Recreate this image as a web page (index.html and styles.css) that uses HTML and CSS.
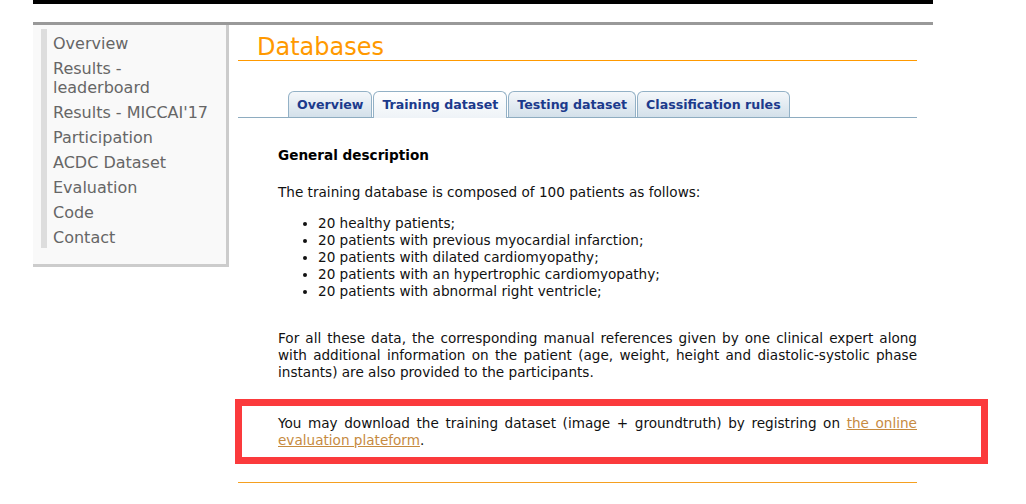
FILE: index.html
```html
<!DOCTYPE html>
<html lang="en">
<head>
<meta charset="utf-8">
<title>Databases</title>
<link rel="stylesheet" href="styles.css">
</head>
<body>
<div class="page">
  <div class="topbar"></div>
  <div class="main">
    <nav class="sidebar">
      <ul class="menu">
        <li>Overview</li>
        <li>Results -<br>leaderboard</li>
        <li>Results - MICCAI'17</li>
        <li>Participation</li>
        <li>ACDC Dataset</li>
        <li>Evaluation</li>
        <li>Code</li>
        <li>Contact</li>
      </ul>
    </nav>
    <div class="content">
      <h1 class="title">Databases</h1>
      <div class="tabs">
        <div class="tab">Overview</div>
        <div class="tab active">Training dataset</div>
        <div class="tab">Testing dataset</div>
        <div class="tab">Classification rules</div>
      </div>
      <div class="body">
        <h2 class="subtitle">General description</h2>
        <p class="intro">The training database is composed of 100 patients as follows:</p>
        <ul class="list">
          <li>20 healthy patients;</li>
          <li>20 patients with previous myocardial infarction;</li>
          <li>20 patients with dilated cardiomyopathy;</li>
          <li>20 patients with an hypertrophic cardiomyopathy;</li>
          <li>20 patients with abnormal right ventricle;</li>
        </ul>
        <p class="justified spaced">For all these data, the corresponding manual references given by one clinical expert along with additional information on the patient (age, weight, height and diastolic-systolic phase instants) are also provided to the participants.</p>
      </div>
      <div class="highlight">
        <p class="justified">You may download the training dataset (image + groundtruth) by registring on <a href="#" class="link">the online evaluation plateform</a>.</p>
      </div>
      <div class="footer-rule"></div>
    </div>
  </div>
</div>
</body>
</html>
```
FILE: styles.css
```css
html, body {
  margin: 0;
  padding: 0;
  background: #ffffff;
}
body {
  font-family: "DejaVu Sans", Verdana, sans-serif;
  font-size: 13.6px;
  color: #111;
}
.page {
  width: 900px;
  margin-left: 33px;
}
.topbar {
  height: 4px;
  background: #000;
}
.main {
  margin-top: 18px;
  border-top: 3px solid #999;
  display: flex;
  align-items: flex-start;
}
.sidebar {
  width: 193px;
  background: #f9f9f9;
  border-right: 3px solid #ccc;
  border-bottom: 3px solid #ccc;
  padding: 4px 0 16px 0;
}
.menu {
  list-style: none;
  margin: 0 0 0 8px;
  padding: 5px 0 1px 6px;
  border-left: 6px solid #ddd;
}
.menu li {
  font-size: 16px;
  line-height: 19px;
  color: #666;
  margin-bottom: 6px;
}
.menu li:last-child {
  margin-bottom: 0;
}
.content {
  margin-left: 9px;
  width: 679px;
}
.title {
  margin: 7px 0 0 0;
  padding: 2px 0 0 19px;
  font-size: 24px;
  line-height: 26px;
  font-weight: normal;
  color: #f90;
  border-bottom: 1px solid #f90;
}
.tabs {
  margin-top: 29px;
  padding-left: 50px;
  display: flex;
  align-items: flex-end;
  border-bottom: 1px solid #8eacc0;
  height: 27px;
}
.tab {
  height: 25px;
  line-height: 25px;
  padding: 0 8px;
  margin-right: 1px;
  border: 1px solid #93b1c6;
  border-bottom: none;
  border-radius: 6px 6px 0 0;
  background: linear-gradient(#f4f7fa, #d3e0ea);
  font-size: 12.6px;
  font-weight: bold;
  color: #1c3a8c;
  white-space: nowrap;
}
.tab.active {
  height: 26px;
  margin-bottom: -1px;
  background: linear-gradient(#ffffff, #eef3f7);
}
.body {
  padding: 0 0 0 40px;
}
.subtitle {
  margin: 29px 0 0 0;
  font-size: 13.6px;
  line-height: 17px;
  font-weight: bold;
  color: #000;
}
.intro {
  margin: 20px 0 0 0;
  line-height: 17px;
}
.list {
  margin: 14px 0 0 0;
  padding-left: 40px;
  line-height: 17px;
}
.justified {
  margin: 0;
  line-height: 17px;
  text-align: justify;
}
.spaced {
  margin-top: 30px;
}
.highlight {
  margin: 18px -71px 0 -3px;
  border: 7px solid #fb3a3c;
  padding: 9px 64px 8px 36px;
}
.link {
  color: #c68a3f;
}
.footer-rule {
  margin-top: 18px;
  border-top: 1px solid #f5a020;
}
```
